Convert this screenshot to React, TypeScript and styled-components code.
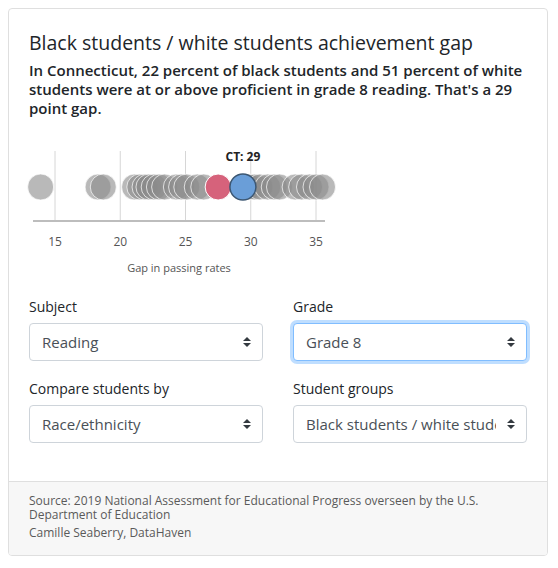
import * as React from "react";
import styled, { createGlobalStyle } from "styled-components";

const GlobalStyle = createGlobalStyle`
  body {
    margin: 8px 10px 8px 8px;
    background: #fff;
    font-family: "Open Sans", "Noto Sans", sans-serif;
    color: #212529;
  }
  * { box-sizing: border-box; }
`;

const Card = styled.div`
  border: 1px solid #dfdfdf;
  border-radius: 4px;
  overflow: hidden;
  background: #fff;
`;

const CardBody = styled.div`
  padding: 21px 20px 21px;
`;

const Title = styled.h5`
  margin: 0 0 6px;
  font-size: 19.5px;
  font-weight: 500;
  line-height: 25px;
  color: #212529;
`;

const Subtitle = styled.h6`
  margin: 0;
  font-size: 15px;
  font-weight: 600;
  line-height: 19px;
  color: #212529;
`;

const Chart = styled.svg`
  display: block;
  margin: 8px 0 14px;
  overflow: visible;
`;

const FormRow = styled.div`
  display: grid;
  grid-template-columns: 1fr 1fr;
  column-gap: 30px;
`;

const Group = styled.div`
  margin-bottom: 17px;
`;

const Label = styled.label`
  display: block;
  font-size: 14px;
  line-height: 21px;
  margin-bottom: 6px;
  color: #212529;
`;

const SelectWrap = styled.div`
  position: relative;
`;

const Select = styled.select<{ $focused?: boolean }>`
  display: block;
  width: 100%;
  height: 38px;
  padding: 6px 30px 6px 12px;
  font-family: inherit;
  font-size: 15px;
  color: #495057;
  background: #fff;
  border: 1px solid ${(p) => (p.$focused ? "#80bdff" : "#ced4da")};
  border-radius: 4px;
  appearance: none;
  outline: none;
  box-shadow: ${(p) => (p.$focused ? "0 0 0 3px rgba(0, 123, 255, 0.25)" : "none")};
`;

const Caret = styled.svg`
  position: absolute;
  right: 12px;
  top: 50%;
  transform: translateY(-50%);
  pointer-events: none;
`;

const Footer = styled.div`
  background: #f7f7f7;
  border-top: 1px solid #dfdfdf;
  padding: 12px 20px 14px;
  font-size: 12px;
  color: #5a5a5a;
`;

const Source = styled.p`
  margin: 0 0 4px;
  line-height: 13.5px;
`;

const Credit = styled.p`
  margin: 0;
  line-height: 16px;
`;

const grays = [
  13.9, 18.3, 18.7, 21.1, 21.5, 21.9, 22.2, 22.6, 23.0, 23.4, 24.3, 24.7, 25.1,
  25.9, 26.4, 29.9, 30.3, 30.7, 31.3, 31.8, 32.2, 33.4, 33.9, 34.5, 35.0, 35.5,
];

const sx = (v: number) => 26 + (v - 15) * 13.05;
const CY = 61;

const ticks = [15, 20, 25, 30, 35];

const DotChart = () => (
  <Chart width={300} height={156} viewBox="0 0 300 156">
    {ticks.map((t) => (
      <line key={t} x1={sx(t)} x2={sx(t)} y1={25} y2={95} stroke="#d6d6d6" strokeWidth={1} />
    ))}
    {grays.map((v, i) => (
      <circle key={i} cx={sx(v)} cy={CY} r={13} fill="#8a8a8a" fillOpacity={0.6} stroke="#fff" strokeOpacity={0.7} strokeWidth={1} />
    ))}
    <circle cx={sx(27.5)} cy={CY} r={13} fill="#d6627b" stroke="#fff" strokeWidth={1} />
    <circle cx={sx(29.4)} cy={CY} r={13} fill="#6a9ed8" stroke="#3c5773" strokeWidth={1.5} />
    <text x={sx(29.4)} y={35} textAnchor="middle" fontSize={12} fontWeight={700} fill="#222">
      CT: 29
    </text>
    <line x1={4} x2={296} y1={95} y2={95} stroke="#bdbdbd" strokeWidth={2} />
    {ticks.map((t) => (
      <text key={t} x={sx(t)} y={120} textAnchor="middle" fontSize={12} fill="#555">
        {t}
      </text>
    ))}
    <text x={150} y={146} textAnchor="middle" fontSize={11} fill="#555">
      Gap in passing rates
    </text>
  </Chart>
);

const CaretIcon = () => (
  <Caret width={8} height={10} viewBox="0 0 8 10">
    <path d="M4 0 L8 4 H0 Z M0 6 H8 L4 10 Z" fill="#343a40" />
  </Caret>
);

const Field = ({
  label,
  value,
  focused,
}: {
  label: string;
  value: string;
  focused?: boolean;
}) => (
  <Group>
    <Label>{label}</Label>
    <SelectWrap>
      <Select $focused={focused} defaultValue={value}>
        <option>{value}</option>
      </Select>
      <CaretIcon />
    </SelectWrap>
  </Group>
);

export default function App() {
  return (
    <>
      <GlobalStyle />
      <Card>
        <CardBody>
          <Title>Black students / white students achievement gap</Title>
          <Subtitle>
            In Connecticut, 22 percent of black students and 51 percent of white
            students were at or above proficient in grade 8 reading. That's a 29
            point gap.
          </Subtitle>
          <DotChart />
          <FormRow>
            <Field label="Subject" value="Reading" />
            <Field label="Grade" value="Grade 8" focused />
            <Field label="Compare students by" value="Race/ethnicity" />
            <Field label="Student groups" value="Black students / white students" />
          </FormRow>
        </CardBody>
        <Footer>
          <Source>
            Source: 2019 National Assessment for Educational Progress overseen by the U.S.
            Department of Education
          </Source>
          <Credit>Camille Seaberry, DataHaven</Credit>
        </Footer>
      </Card>
    </>
  );
}
